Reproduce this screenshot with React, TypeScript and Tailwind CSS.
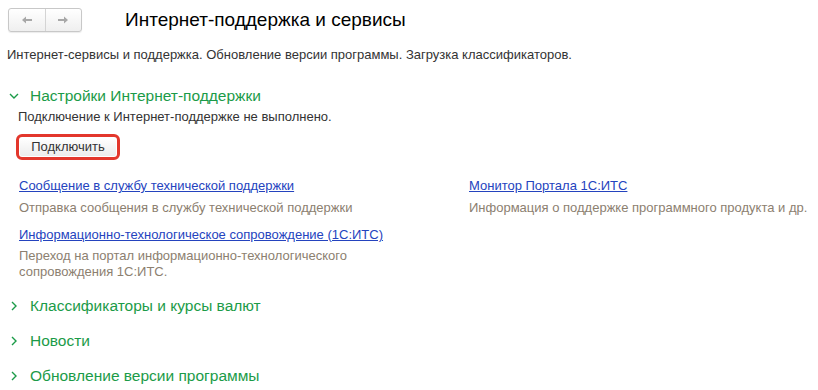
import React from 'react';

const Chevron = ({ open }: { open: boolean }) => (
  <svg width="10" height="10" viewBox="0 0 10 10" className="shrink-0">
    {open ? (
      <path d="M1 3 L5 7 L9 3" fill="none" stroke="#1b9b48" strokeWidth="1.4" />
    ) : (
      <path d="M3 1 L7 5 L3 9" fill="none" stroke="#1b9b48" strokeWidth="1.4" />
    )}
  </svg>
);

const Section = ({ title, open, className = '' }: { title: string; open: boolean; className?: string }) => (
  <div className={`flex items-center h-[20px] pl-[9px] ${className}`}>
    <Chevron open={open} />
    <span className="ml-[11px] text-[15.5px] leading-[20px] text-[#1b9b48]">{title}</span>
  </div>
);

const Arrow = ({ dir }: { dir: 'left' | 'right' }) => (
  <svg width="12" height="10" viewBox="0 0 12 10">
    {dir === 'left' ? (
      <path d="M1 5 L5 1.5 L5 4 L11 4 L11 6 L5 6 L5 8.5 Z" fill="#a8a8a8" />
    ) : (
      <path d="M11 5 L7 1.5 L7 4 L1 4 L1 6 L7 6 L7 8.5 Z" fill="#a8a8a8" />
    )}
  </svg>
);

export default function App() {
  return (
    <div className="w-[818px] h-[390px] bg-white overflow-hidden font-['Liberation_Sans',Arial,sans-serif] text-[#333]">
      {/* Header */}
      <div className="flex items-center pt-[8px] pl-[8px]">
        <div className="flex w-[74px] h-[24px] rounded-[3px] border border-[#c8c8c8] bg-gradient-to-b from-white to-[#efefef] shadow-[0_1px_1px_rgba(0,0,0,0.08)]">
          <div className="flex-1 flex items-center justify-center border-r border-[#d4d4d4]">
            <Arrow dir="left" />
          </div>
          <div className="flex-1 flex items-center justify-center">
            <Arrow dir="right" />
          </div>
        </div>
        <h1 className="ml-[43px] text-[19px] leading-[24px] text-black">Интернет-поддержка и сервисы</h1>
      </div>

      <p className="mt-[15px] pl-[7px] text-[13px] leading-[16px] text-[#333]">
        Интернет-сервисы и поддержка. Обновление версии программы. Загрузка классификаторов.
      </p>

      <Section title="Настройки Интернет-поддержки" open className="mt-[23px]" />

      <p className="mt-[3px] pl-[18px] text-[13px] leading-[16px] text-[#333]">
        Подключение к Интернет-поддержке не выполнено.
      </p>

      <div className="mt-[9px] ml-[16px] w-[104px] h-[26px] rounded-[6px] border-[3px] border-[#e3372c] p-[1px]">
        <button className="w-full h-full rounded-[2px] bg-gradient-to-b from-white to-[#ececec] text-[13px] leading-[14px] text-[#333] flex items-center justify-center">
          Подключить
        </button>
      </div>

      <div className="mt-[18px] grid grid-cols-[469px_1fr] text-[13px] leading-[16px]">
        <div className="pl-[19px]">
          <a className="text-[#2443be] underline">Сообщение в службу технической поддержки</a>
          <p className="mt-[6px] text-[#8c8070]">Отправка сообщения в службу технической поддержки</p>
          <a className="block mt-[11px] text-[#2443be] underline">Информационно-технологическое сопровождение (1С:ИТС)</a>
          <p className="mt-[5px] w-[350px] text-[#8c8070]">
            Переход на портал информационно-технологического сопровождения 1С:ИТС.
          </p>
        </div>
        <div>
          <a className="text-[#2443be] underline">Монитор Портала 1С:ИТС</a>
          <p className="mt-[6px] text-[#8c8070]">Информация о поддержке программного продукта и др.</p>
        </div>
      </div>

      <Section title="Классификаторы и курсы валют" open={false} className="mt-[16px]" />
      <Section title="Новости" open={false} className="mt-[15px]" />
      <Section title="Обновление версии программы" open={false} className="mt-[15px]" />
    </div>
  );
}
